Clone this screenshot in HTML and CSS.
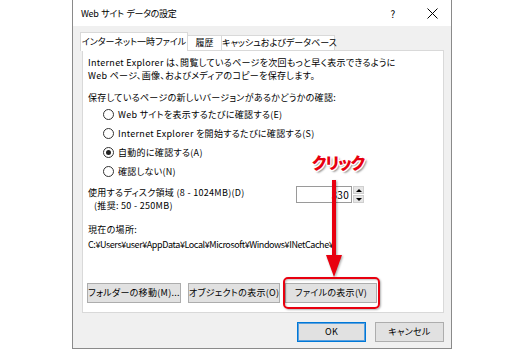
FILE: index.html
```html
<!DOCTYPE html>
<html>
<head>
<meta charset="utf-8">
<title>Web サイト データの設定</title>
<link rel="stylesheet" href="styles.css">
</head>
<body>
<div class="dialog">
  <div class="titlebar">
    <div class="title">Web サイト データの設定</div>
    <div class="help">?</div>
    <div class="close">
      <svg width="11" height="11" viewBox="0 0 11 11">
        <path d="M0.5 0.5L10.5 10.5M10.5 0.5L0.5 10.5" stroke="#000" stroke-width="1" fill="none"/>
      </svg>
    </div>
  </div>
  <div class="client">
    <div class="tabs">
      <div class="tab active">インターネット一時ファイル</div>
      <div class="tab tab-history">履歴</div>
      <div class="tab tab-cache">キャッシュおよびデータベース</div>
    </div>
    <div class="panel">
      <p class="intro">Internet Explorer は、閲覧しているページを次回もっと早く表示できるように<br>Web ページ、画像、およびメディアのコピーを保存します。</p>
      <p class="question">保存しているページの新しいバージョンがあるかどうかの確認:</p>
      <ul class="radios">
        <li><span class="radio"></span>Web サイトを表示するたびに確認する(E)</li>
        <li><span class="radio"></span>Internet Explorer を開始するたびに確認する(S)</li>
        <li><span class="radio checked"></span>自動的に確認する(A)</li>
        <li><span class="radio"></span>確認しない(N)</li>
      </ul>
      <div class="disk">
        <div class="disk-label">使用するディスク領域 (8 - 1024MB)(D)<br><span class="hint">(推奨: 50 - 250MB)</span></div>
        <div class="spin">
          <div class="spin-value">330</div>
          <div class="spin-btns">
            <span class="spin-btn"><i class="tri-up"></i></span>
            <span class="spin-btn"><i class="tri-down"></i></span>
          </div>
        </div>
      </div>
      <p class="loc-label">現在の場所:</p>
      <p class="loc-path">C:¥Users¥user¥AppData¥Local¥Microsoft¥Windows¥INetCache¥</p>
      <div class="panel-buttons">
        <button class="btn btn-folder">フォルダーの移動(M)...</button>
        <button class="btn btn-objects">オブジェクトの表示(O)</button>
        <button class="btn btn-files">ファイルの表示(V)</button>
      </div>
    </div>
    <div class="footer">
      <button class="btn btn-default">OK</button>
      <button class="btn">キャンセル</button>
    </div>
  </div>
</div>

<!-- annotation layer -->
<div class="callout">クリック</div>
<svg class="arrow" width="20" height="100" viewBox="0 0 20 100">
  <rect x="7" y="1" width="4" height="77" fill="#e8000f"/>
  <polygon points="1,76 17,76 9,98" fill="#e8000f"/>
</svg>
<div class="highlight"></div>
</body>
</html>
```

FILE: styles.css
```css
body {
  margin: 0;
  width: 524px;
  height: 350px;
  overflow: hidden;
  position: relative;
  background-color: #fff;
  font-family: "Noto Sans CJK JP", sans-serif;
  font-size: 9px;
  letter-spacing: 0.3px;
  font-feature-settings: "palt";
  color: #000;
}

p {
  margin: 0;
}

.dialog {
  margin-left: 72px;
  width: 378px;
  height: 348px;
  border: 1px solid #8a8a8a;
  border-top: none;
  background-color: #f0f0f0;
  display: flex;
  flex-direction: column;
}

.titlebar {
  height: 26px;
  background-color: #fff;
  display: flex;
  align-items: center;
}

.title {
  flex: 1;
  padding-left: 8px;
  letter-spacing: -0.3px;
  word-spacing: 1px;
}

.help {
  width: 40px;
  text-align: center;
  font-size: 10px;
}

.close {
  width: 38px;
  display: flex;
  justify-content: center;
}

.client {
  flex: 1;
  padding: 9px 7px 0 9px;
}

.tabs {
  display: flex;
  align-items: flex-end;
  height: 15px;
  position: relative;
  z-index: 1;
  letter-spacing: 0;
}

.tab {
  box-sizing: border-box;
  height: 15px;
  border: 1px solid #d9d9d9;
  border-bottom: none;
  border-left: none;
  background-color: #fff;
  line-height: 13px;
  text-align: center;
  white-space: nowrap;
}

.tab.active {
  width: 108px;
  height: 19px;
  margin-left: -2px;
  margin-bottom: -1px;
  border-left: 1px solid #d9d9d9;
  padding-top: 2px;
}

.tab-history {
  width: 34px;
}

.tab-cache {
  width: 113px;
}

.panel {
  box-sizing: border-box;
  height: 263px;
  border: 1px solid #d9d9d9;
  background-color: #fff;
  padding: 5px 0 0 5px;
}

.intro {
  line-height: 13px;
}

.question {
  margin-top: 9px;
  line-height: 13px;
}

.radios {
  list-style: none;
  margin: 1px 0 0;
  padding: 0 0 0 15px;
}

.radios li {
  height: 19px;
  display: flex;
  align-items: center;
}

.radio {
  box-sizing: border-box;
  width: 11px;
  height: 11px;
  border: 1px solid #333;
  border-radius: 50%;
  margin-right: 4px;
  display: flex;
  align-items: center;
  justify-content: center;
}

.radio.checked::after {
  content: "";
  width: 5px;
  height: 5px;
  border-radius: 50%;
  background-color: #222;
}

.disk {
  margin-top: 5px;
  display: flex;
}

.disk-label {
  width: 208px;
  line-height: 13px;
}

.hint {
  padding-left: 6px;
}

.spin {
  display: flex;
  height: 17px;
}

.spin-value {
  box-sizing: border-box;
  width: 56px;
  height: 17px;
  border: 1px solid #9a9a9a;
  text-align: right;
  padding-right: 2px;
  line-height: 15px;
  font-size: 10px;
}

.spin-btns {
  margin-left: 1px;
  width: 11px;
  display: flex;
  flex-direction: column;
  gap: 1px;
}

.spin-btn {
  flex: 1;
  background-color: #e6e6e6;
  border: 1px solid #cfcfcf;
  display: flex;
  align-items: center;
  justify-content: center;
}

.tri-up {
  border-left: 3px solid transparent;
  border-right: 3px solid transparent;
  border-bottom: 3px solid #000;
}

.tri-down {
  border-left: 3px solid transparent;
  border-right: 3px solid transparent;
  border-top: 3px solid #000;
}

.loc-label {
  margin-top: 11px;
  line-height: 13px;
}

.loc-path {
  margin-top: 2px;
  line-height: 13px;
  letter-spacing: -0.42px;
}

.panel-buttons {
  margin-top: 32px;
  margin-left: -1px;
  display: flex;
}

.btn {
  box-sizing: border-box;
  height: 20px;
  padding: 0;
  border: 1px solid #adadad;
  background-color: #e1e1e1;
  font: inherit;
  letter-spacing: inherit;
  color: #000;
  line-height: 18px;
  white-space: nowrap;
}

.btn-folder {
  width: 94px;
}

.btn-objects {
  width: 92px;
  margin-left: 7px;
}

.btn-files {
  width: 92px;
  margin-left: 5px;
}

.footer {
  display: flex;
  justify-content: flex-end;
  gap: 9px;
  padding-top: 9px;
}

.footer .btn {
  width: 69px;
}

.btn-default {
  border-color: #0078d7;
  box-shadow: inset 0 0 0 1px #5aa0de;
}

/* annotations drawn over the dialog */
.callout {
  position: absolute;
  left: 312px;
  top: 152px;
  font-size: 16px;
  font-weight: 900;
  line-height: 20px;
  letter-spacing: -1px;
  color: #e8000f;
  text-shadow: 1px 0 0 #fff, -1px 0 0 #fff, 0 1px 0 #fff, 0 -1px 0 #fff,
    1px 1px 0 #fff, -1px -1px 0 #fff, 1px -1px 0 #fff, -1px 1px 0 #fff,
    2px 2px 2px rgba(0, 0, 0, 0.45);
}

.arrow {
  position: absolute;
  left: 325px;
  top: 179px;
  filter: drop-shadow(1px 1px 1px rgba(0, 0, 0, 0.35));
}

.highlight {
  position: absolute;
  left: 283px;
  top: 277px;
  width: 97px;
  height: 32px;
  box-sizing: border-box;
  border: 2px solid #e8000f;
  border-radius: 5px;
  box-shadow: 1px 1px 2px rgba(0, 0, 0, 0.3), inset 1px 1px 2px rgba(0, 0, 0, 0.25);
}
```
